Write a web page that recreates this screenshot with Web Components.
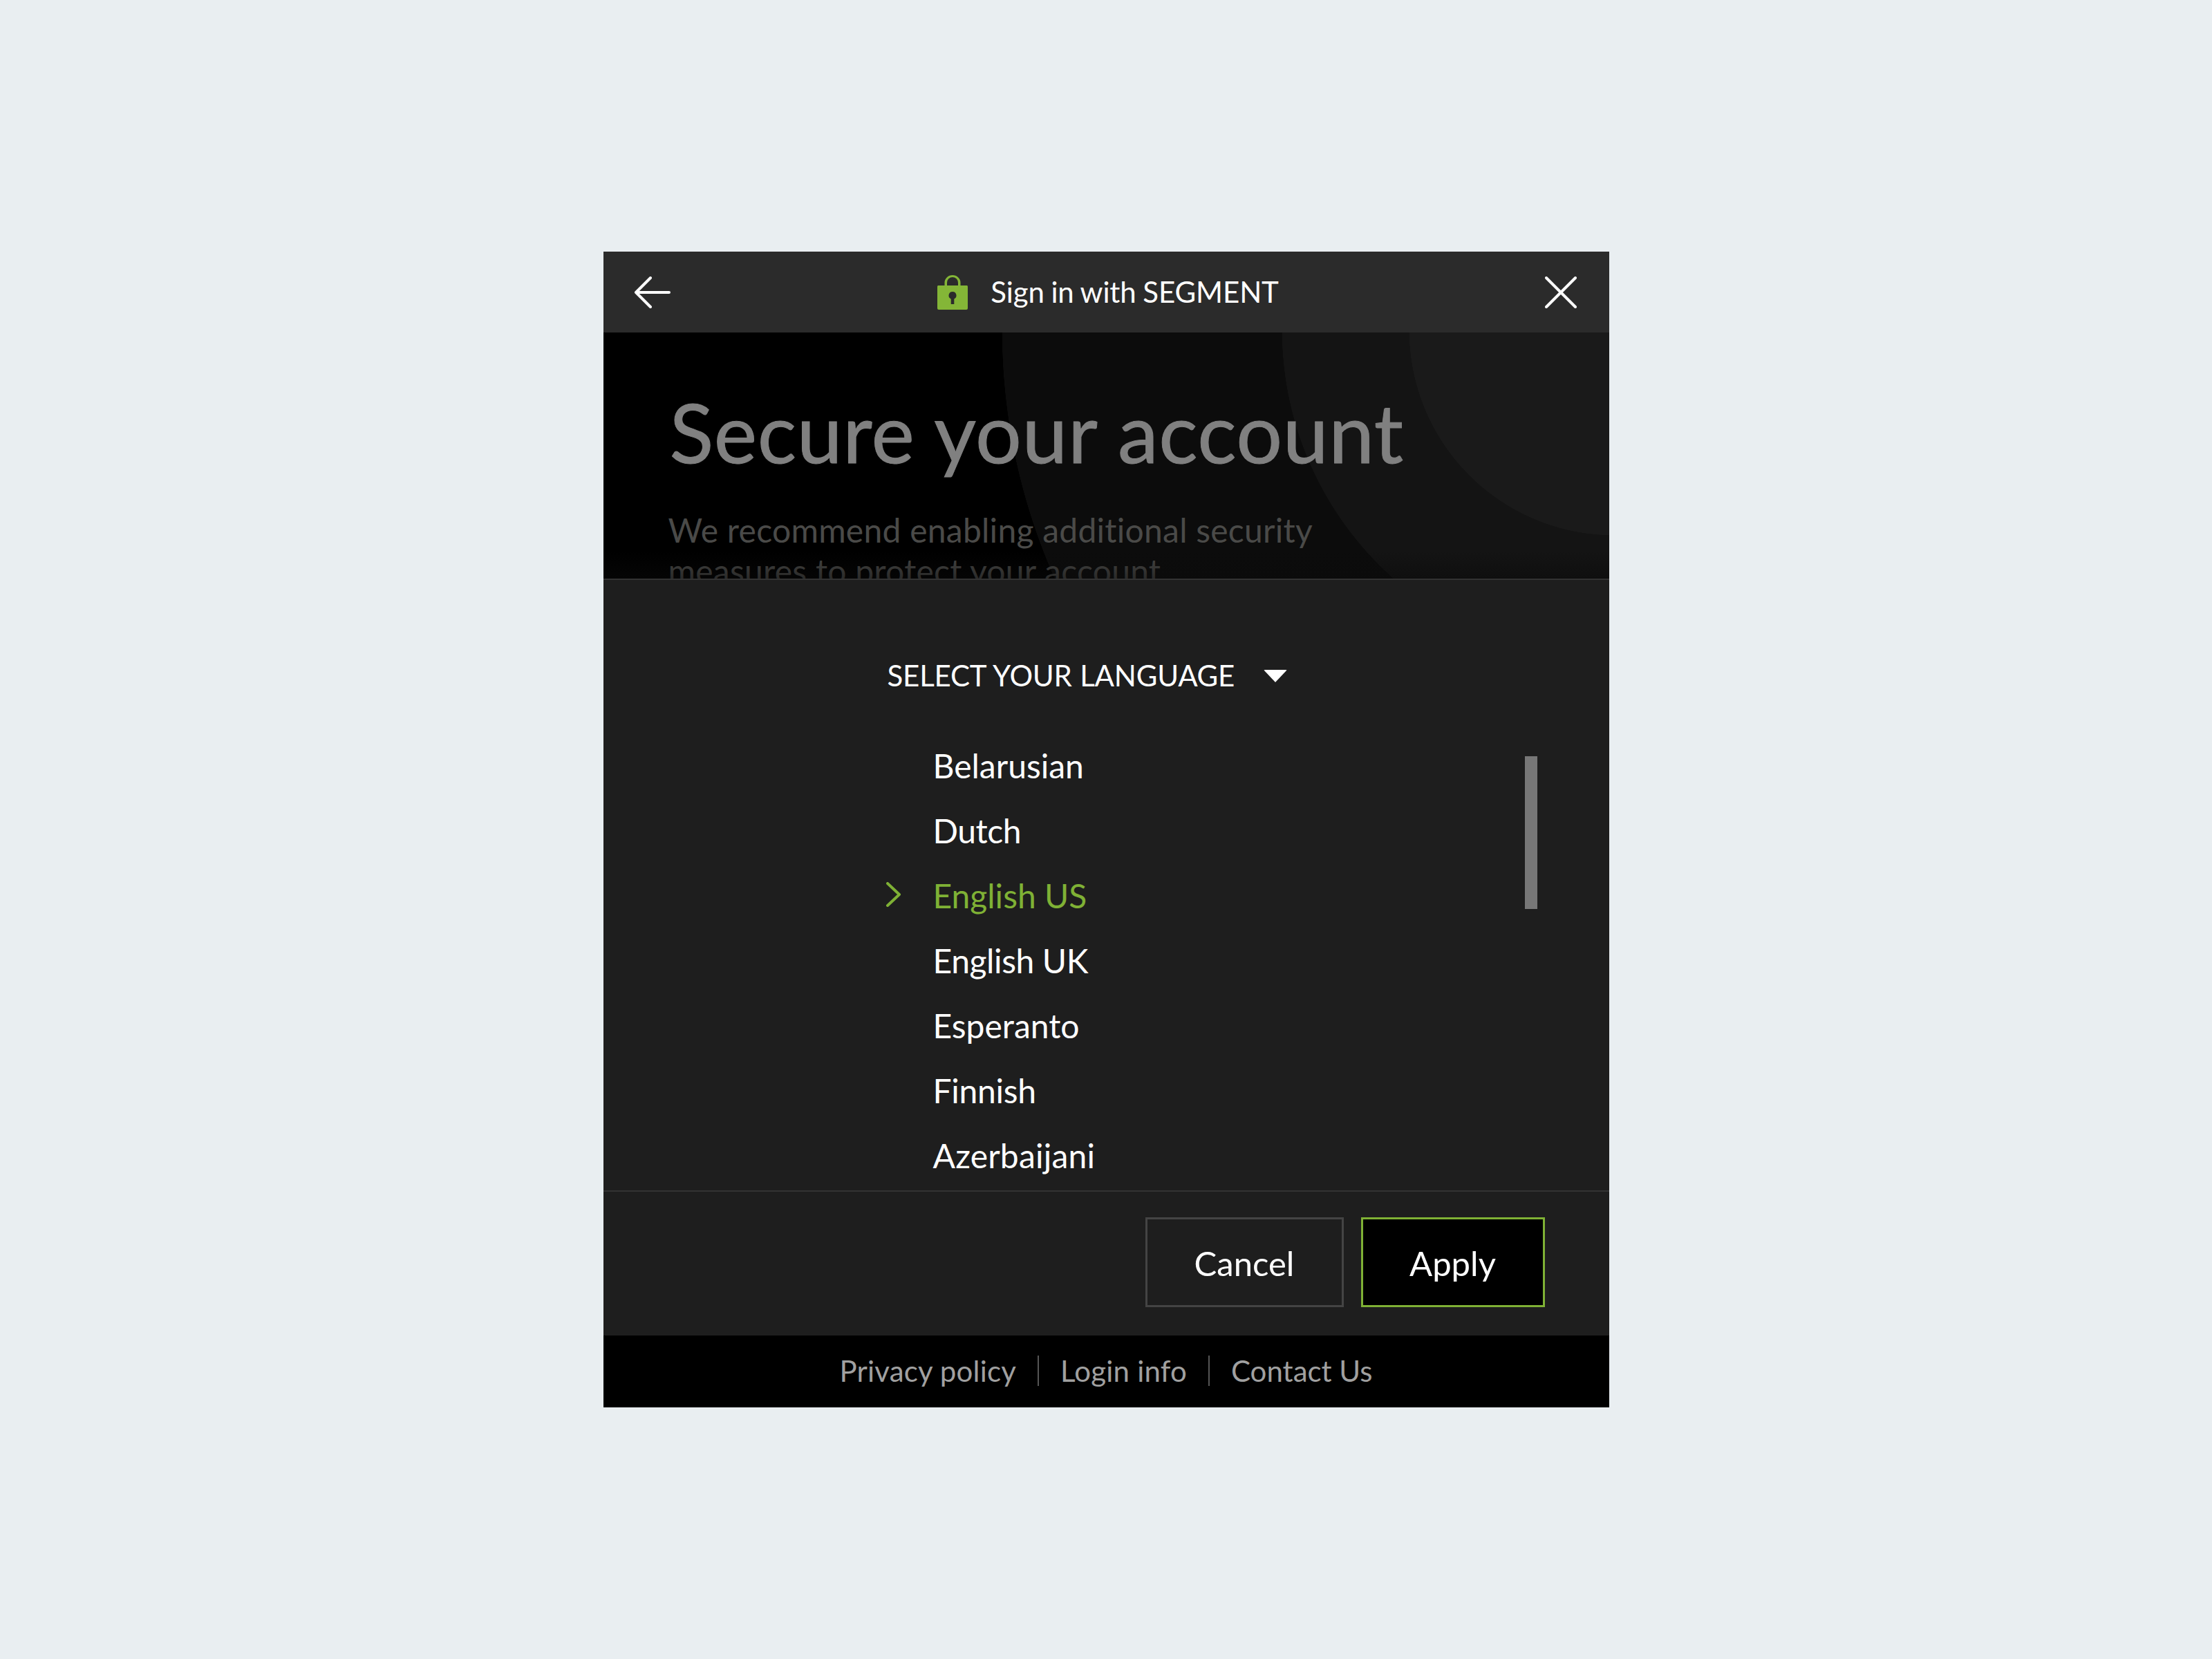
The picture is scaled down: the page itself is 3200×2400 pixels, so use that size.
<!DOCTYPE html>
<html lang="en"><head><meta charset="utf-8"><title>Sign in</title>
<style>
html,body{margin:0;padding:0}
body{background:#e9eef1;font-family:Lato,"Noto Sans",sans-serif;font-variant-ligatures:none;min-height:2400px;display:flex;align-items:center;justify-content:center}
</style></head><body>
<sign-dialog>
  <dialog-header slot="header" title-text="Sign in with SEGMENT"></dialog-header>
  <hero-banner slot="hero" heading="Secure your account">We recommend enabling additional security measures to protect your account</hero-banner>
  <language-picker slot="body" label="SELECT YOUR LANGUAGE">
    <language-item>Belarusian</language-item>
    <language-item style="letter-spacing:-.4px">Dutch</language-item>
    <language-item selected>English US</language-item>
    <language-item style="letter-spacing:-.4px">English UK</language-item>
    <language-item>Esperanto</language-item>
    <language-item style="letter-spacing:-.3px">Finnish</language-item>
    <language-item style="letter-spacing:.2px">Azerbaijani</language-item>
  </language-picker>
  <dialog-actions slot="actions">
    <action-button>Cancel</action-button>
    <action-button primary>Apply</action-button>
  </dialog-actions>
  <dialog-footer slot="footer">
    <a>Privacy policy</a><a>Login info</a><a>Contact Us</a>
  </dialog-footer>
</sign-dialog>
<script>
function def(name, html, init){
  customElements.define(name, class extends HTMLElement{
    constructor(){super();const r=this.attachShadow({mode:'open'});r.innerHTML=html;}
    connectedCallback(){if(init)init(this,this.shadowRoot);}
  });
}
def('sign-dialog',`<style>
:host{display:flex;flex-direction:column;width:1455px;height:1672px;background:#1e1e1e;color:#fff;overflow:hidden}
::slotted([slot=body]){flex:1;min-height:0}
</style><slot name="header"></slot><slot name="hero"></slot><slot name="body"></slot><slot name="actions"></slot><slot name="footer"></slot>`);

def('dialog-header',`<style>
:host{display:flex;align-items:center;justify-content:space-between;height:117px;background:#2b2b2b;padding:0 47px 0 44px;box-sizing:border-box;flex:none}
.c{display:flex;align-items:center;gap:32px;font-size:42px;color:#fff}
.c span{position:relative;top:-1px;letter-spacing:-.1px;word-spacing:-1px}
svg{display:block}
</style>
<svg width="54" height="46" viewBox="0 0 54 46" fill="none" stroke="#fff" stroke-width="4" stroke-linecap="round" stroke-linejoin="round"><path d="M24 2 3 23 24 44M3 23H51"/></svg>
<div class="c">
<svg width="46" height="50" viewBox="0 0 46 50"><path fill="#84b637" d="M2 15h9.500V11a11.500 11 0 0 1 23 0v4H44a2 2 0 0 1 1 2v31a2 2 0 0 1-2 2H3a2 2 0 0 1-2-2V17a2 2 0 0 1 1-2Z"/><path fill="#2b2b2b" d="M15 15V11a8 8 0 0 1 16 0v4Z"/><path fill="#2b2b2b" d="M23 24a5.500 5.500 0 0 1 2.300 10.500V42h-4.600V34.500A5.500 5.500 0 0 1 23 24Z"/></svg>
<span id="t"></span></div>
<svg width="46" height="46" viewBox="0 0 46 46" fill="none" stroke="#fff" stroke-width="4" stroke-linecap="round"><path d="M2 2 44 44M44 2 2 44"/></svg>`,
(h,r)=>{r.getElementById('t').textContent=h.getAttribute('title-text');});

def('hero-banner',`<style>
:host{display:block;position:relative;flex:none;height:358px;box-sizing:border-box;overflow:hidden;border-bottom:2px solid #333;
background:radial-gradient(circle at 1462px -3px,#1a1a1a 296px,#141414 296.5px,#141414 480px,#0c0c0c 480.5px,#0c0c0c 885px,#000 885.5px)}
h1{margin:0;font-weight:400;font-size:118px;line-height:140px;color:#808080;padding:74px 0 0 96px;letter-spacing:.65px;-webkit-text-stroke:1px #808080}
p{margin:42px 0 0 94px;width:1000px;font-size:48px;line-height:59px;color:#4a4a48;letter-spacing:.25px}
:host::after{content:"";position:absolute;left:0;right:0;bottom:0;height:40px;background:linear-gradient(rgba(30,30,30,0),rgba(10,10,10,.5))}
</style><h1 id="h"></h1><p><slot></slot></p>`,
(h,r)=>{r.getElementById('h').textContent=h.getAttribute('heading');});

def('language-picker',`<style>
:host{display:flex;flex-direction:column;overflow:hidden;padding:0 0 0 411px;box-sizing:border-box}
.l{display:flex;align-items:center;gap:42px;font-size:42px;line-height:60px;margin-top:108px;height:60px}
.l span:first-child{word-spacing:1px;letter-spacing:-.2px}
.tri{width:0;height:0;border-left:17px solid transparent;border-right:17px solid transparent;border-top:18px solid #fff;border-radius:2px;position:relative;top:1px}
.row{display:flex;flex:1;min-height:0;margin-top:53px}
.list{flex:1;display:flex;flex-direction:column}
.thumb{width:18px;height:221px;background:#777;margin:34px 104px 0 0}
</style><div class="l"><span id="lb"></span><span class="tri"></span></div>
<div class="row"><div class="list"><slot></slot></div><div class="thumb"></div></div>`,
(h,r)=>{r.getElementById('lb').textContent=h.getAttribute('label');});

def('language-item',`<style>
:host{display:flex;align-items:center;height:94px;flex:none;font-size:48px;color:#fff;position:relative;padding-left:66px}
:host([selected]){color:#7fb135}
svg{display:none;position:absolute;left:-3px;top:28px}
:host([selected]) svg{display:block}
</style><svg width="24" height="36" viewBox="0 0 24 36" fill="none" stroke="#7fb135" stroke-width="4" stroke-linecap="round" stroke-linejoin="round"><path d="M3 2 20 18 3 34"/></svg><slot></slot>`);

def('dialog-actions',`<style>
:host{display:flex;justify-content:flex-end;gap:25px;flex:none;height:210px;box-sizing:border-box;border-top:2px solid #333;padding:37px 93px 0 0;background:#1e1e1e}
</style><slot></slot>`);

def('action-button',`<style>
:host{display:flex;align-items:center;justify-content:center;box-sizing:border-box;height:130px;width:287px;border:3px solid #444;font-size:49px;color:#fff;padding-top:2px}
:host([primary]){width:266px;background:#000;border-color:#7fb135}
</style><slot></slot>`);

def('dialog-footer',`<style>
:host{display:flex;justify-content:center;align-items:center;flex:none;height:104px;background:#000;font-size:42px;color:#a0a0a0;padding-bottom:2px;box-sizing:border-box}
::slotted(a){display:block;line-height:44px;padding:0 31px;letter-spacing:.2px}
::slotted(a:last-child){letter-spacing:0}
::slotted(a:not(:last-child)){border-right:2px solid #555}
</style><slot></slot>`);
</script>
</body></html>
